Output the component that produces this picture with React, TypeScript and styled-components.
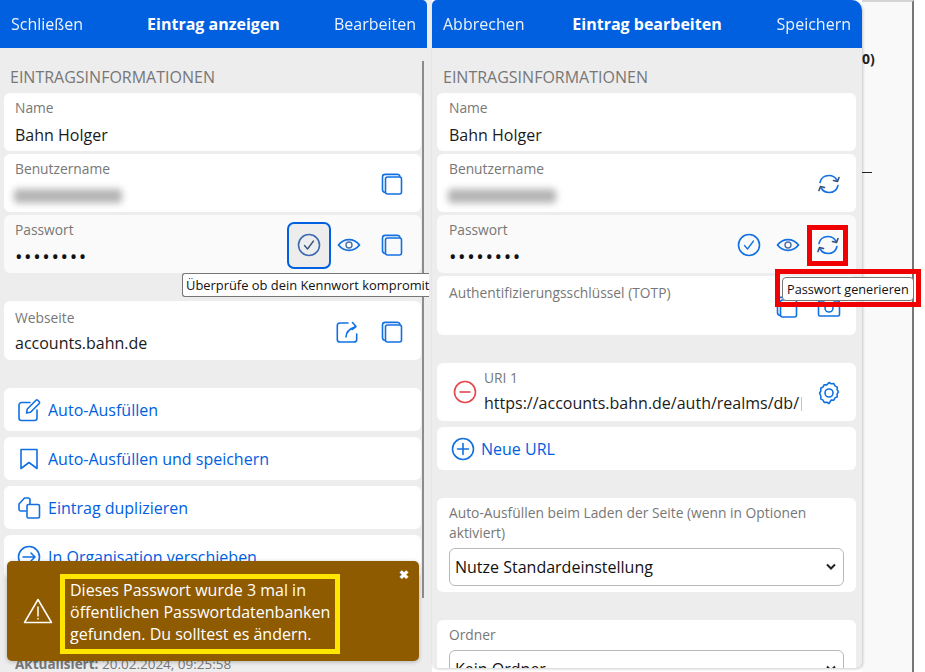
import React from "react";
import styled, { createGlobalStyle } from "styled-components";

const BLUE = "#0060df";
const ICON = "#1270e3";

const GlobalStyle = createGlobalStyle`
  html, body {
    margin: 0;
    padding: 0;
    background: #fff;
  }
  * {
    box-sizing: border-box;
  }
`;

function Svg({ children, size = 24 }: { children: React.ReactNode; size?: number }) {
  return (
    <svg
      width={size}
      height={size}
      viewBox="0 0 24 24"
      fill="none"
      stroke={ICON}
      strokeWidth="1.6"
      strokeLinecap="round"
      strokeLinejoin="round"
    >
      {children}
    </svg>
  );
}

const CopyIcon = () => (
  <Svg>
    <path d="M5 20.5c-1.5-.3-2.5-1.4-2.5-3V5c0-1.6 1-2.6 2.6-2.6h12.3c1.3 0 2.3.7 2.6 1.9" />
    <rect x="5.5" y="5" width="16" height="17" rx="2" />
  </Svg>
);

const CheckIcon = ({ dark }: { dark?: boolean }) => (
  <Svg>
    <circle cx="12" cy="12" r="10.5" stroke={dark ? "#3f6cb0" : ICON} />
    <path d="M7.5 12.5l3 3.5 6-8" stroke={dark ? "#35507a" : ICON} strokeWidth="1.3" />
  </Svg>
);

const EyeIcon = () => (
  <Svg>
    <path d="M1.5 12c2.800-3.500 6.300-5.300 10.500-5.300s7.700 1.800 10.500 5.300c-2.800 3.500-6.300 5.300-10.500 5.300S4.300 15.500 1.500 12z" strokeWidth="1.8" />
    <circle cx="12" cy="12" r="3" stroke="#4a6fa8" strokeWidth="1.4" />
  </Svg>
);

const RefreshIcon = () => (
  <Svg>
    <path d="M3 10.500C4 6.200 7.600 3.500 12 3.500c3.400 0 6.100 1.500 7.800 4.500" />
    <path d="M21 13.500c-1 4.300-4.600 7-9 7-3.400 0-6.100-1.500-7.800-4.500" />
    <path d="M22 5.500l-1.500 4-4-1" stroke="#35507a" />
    <path d="M2 18.500l1.500-4 4 1" stroke="#35507a" />
  </Svg>
);

const ShareIcon = () => (
  <Svg>
    <path d="M13 3H5C3.400 3 2.300 4 2.300 5.600v13.800C2.300 21 3.400 22 5 22h14c1.600 0 2.700-1 2.700-2.600V14" />
    <path d="M11 17c0-4.500 3-8 9-10" />
    <path d="M17.500 2.500l3.500 4-4 3" />
  </Svg>
);

const CameraIcon = () => (
  <Svg>
    <path d="M3 6h4l2-3h6l2 3h4c.8 0 1.500.7 1.500 1.500v12c0 .8-.7 1.500-1.500 1.500H3c-.8 0-1.500-.7-1.500-1.500v-12C1.500 6.700 2.200 6 3 6z" />
    <circle cx="12" cy="13" r="4" />
  </Svg>
);

const EditIcon = () => (
  <Svg>
    <path d="M13 4.500H4.500C3.200 4.500 2 5.600 2 7v13c0 1.400 1.200 2.500 2.500 2.500h13c1.400 0 2.500-1.100 2.500-2.500v-8" />
    <path d="M9.500 15l.8-4L19 2.300c.5-.5 1.200-.5 1.700 0l1.500 1.500c.5.5.5 1.200 0 1.700L13.500 14.200z" />
  </Svg>
);

const BookmarkIcon = () => (
  <Svg>
    <path d="M4 2.500h16v19l-8-6-8 6z" />
  </Svg>
);

const DuplicateIcon = () => (
  <Svg>
    <path d="M9 15H4c-1.300 0-2-.8-2-2V8l5.500-6H11c1.300 0 2 .8 2 2v4" />
    <rect x="10" y="8.500" width="12.500" height="13.500" rx="1.500" />
  </Svg>
);

const MoveIcon = () => (
  <Svg>
    <circle cx="12" cy="12" r="10.500" />
    <path d="M6 12h12M14 8l4 4-4 4" />
  </Svg>
);

const PlusCircleIcon = () => (
  <Svg>
    <circle cx="12" cy="12" r="10.500" />
    <path d="M12 6.500v11M6.500 12h11" />
  </Svg>
);

const MinusCircleIcon = () => (
  <svg width="24" height="24" viewBox="0 0 24 24" fill="none" stroke="#e5484d" strokeWidth="1.6">
    <circle cx="12" cy="12" r="10.500" />
    <path d="M6.500 12h11" />
  </svg>
);

const GearIcon = () => (
  <Svg>
    <path d="M12 1.500l2.200 1.300 2.600-.2 1.200 2.300 2.300 1.200-.2 2.600 1.300 2.200-1.300 2.200.2 2.600-2.300 1.200-1.200 2.300-2.600-.2L12 22.500 9.800 21.200l-2.600.2-1.200-2.300-2.300-1.200.2-2.600L2.600 12l1.300-2.200-.2-2.600 2.300-1.200 1.200-2.300 2.600.2z" />
    <circle cx="12" cy="12" r="4" />
  </Svg>
);

const WarningIcon = () => (
  <svg width="30" height="26" viewBox="0 0 30 26" fill="none" stroke="#fff" strokeWidth="1.5" strokeLinejoin="round">
    <path d="M15 1.500L28.500 24.500H1.500z" />
    <path d="M15 8.500v10M15 20v1.500" />
  </svg>
);

const Chevron = () => (
  <svg width="12" height="8" viewBox="0 0 12 8" fill="none" stroke="#222" strokeWidth="2">
    <path d="M2 1.500l4 4 4-4" />
  </svg>
);

function App() {
  return (
    <>
      <GlobalStyle />
      <Page>
        <Popup $width={432}>
          <Header $inset={5}>
            <HeaderLink>Schließen</HeaderLink>
            <HeaderTitle>Eintrag anzeigen</HeaderTitle>
            <HeaderLink $end>Bearbeiten</HeaderLink>
          </Header>
          <Body>
            <SectionHead $left={10}>Eintragsinformationen</SectionHead>
            <CardList $left={4} $right={11}>
              <ViewCard>
                <Field>
                  <Label>Name</Label>
                  <Value>Bahn Holger</Value>
                </Field>
              </ViewCard>
              <ViewCard>
                <Field>
                  <Label>Benutzername</Label>
                  <Blurred />
                </Field>
                <IconButton $push={4}>
                  <CopyIcon />
                </IconButton>
              </ViewCard>
              <ViewCard $hover>
                <Field>
                  <Label>Passwort</Label>
                  <Dots>••••••••</Dots>
                </Field>
                <FocusButton>
                  <CheckIcon dark />
                </FocusButton>
                <IconButton>
                  <EyeIcon />
                </IconButton>
                <IconButton $push={4}>
                  <CopyIcon />
                </IconButton>
                <Tooltip>Überprüfe ob dein Kennwort kompromit</Tooltip>
              </ViewCard>
            </CardList>
            <CardList $left={4} $right={11} $top={28}>
              <ViewCard $tall>
                <Field>
                  <LowLabel>Webseite</LowLabel>
                  <Value>accounts.bahn.de</Value>
                </Field>
                <IconButton>
                  <ShareIcon />
                </IconButton>
                <IconButton $push={6}>
                  <CopyIcon />
                </IconButton>
              </ViewCard>
            </CardList>
            <ActionList>
              <ActionRow>
                <EditIcon />
                Auto-Ausfüllen
              </ActionRow>
              <ActionRow>
                <BookmarkIcon />
                Auto-Ausfüllen und speichern
              </ActionRow>
              <ActionRow>
                <DuplicateIcon />
                Eintrag duplizieren
              </ActionRow>
              <ActionRow>
                <MoveIcon />
                In Organisation verschieben
              </ActionRow>
            </ActionList>
            <Updated>
              <b>Aktualisiert:</b> 20.02.2024, 09:25:58
            </Updated>
          </Body>
          <ScrollThumb />
          <Toast>
            <WarningIcon />
            <ToastText>
              Dieses Passwort wurde 3 mal in öffentlichen Passwortdatenbanken gefunden. Du solltest es ändern.
            </ToastText>
            <ToastClose>✖</ToastClose>
          </Toast>
        </Popup>
        <Popup $width={430} $rounded>
          <Header>
            <HeaderLink>Abbrechen</HeaderLink>
            <HeaderTitle>Eintrag bearbeiten</HeaderTitle>
            <HeaderLink $end>Speichern</HeaderLink>
          </Header>
          <Body>
            <SectionHead $left={11}>Eintragsinformationen</SectionHead>
            <CardList $left={5} $right={6}>
              <EditCard>
                <Field>
                  <Label>Name</Label>
                  <Value>Bahn Holger</Value>
                </Field>
              </EditCard>
              <EditCard>
                <Field>
                  <Label>Benutzername</Label>
                  <Blurred />
                </Field>
                <IconButton>
                  <RefreshIcon />
                </IconButton>
              </EditCard>
              <EditCard $hover>
                <Field>
                  <Label>Passwort</Label>
                  <Dots>••••••••</Dots>
                </Field>
                <IconButton>
                  <CheckIcon />
                </IconButton>
                <IconButton>
                  <EyeIcon />
                </IconButton>
                <MarkedButton>
                  <RefreshIcon />
                </MarkedButton>
              </EditCard>
              <EditCard $tall>
                <Field>
                  <LowLabel>Authentifizierungsschlüssel (TOTP)</LowLabel>
                </Field>
                <IconButton $pull={3}>
                  <CopyIcon />
                </IconButton>
                <IconButton>
                  <CameraIcon />
                </IconButton>
              </EditCard>
            </CardList>
            <CardList $left={5} $right={6} $top={28} $gap={6}>
              <UriCard>
                <MinusCircleIcon />
                <UriField>
                  <Label>URI 1</Label>
                  <UriValue>https://accounts.bahn.de/auth/realms/db/</UriValue>
                </UriField>
                <IconButton>
                  <GearIcon />
                </IconButton>
              </UriCard>
              <AddRow>
                <PlusCircleIcon />
                Neue URL
              </AddRow>
            </CardList>
            <CardList $left={5} $right={6} $top={28}>
              <SelectCard>
                <Label>Auto-Ausfüllen beim Laden der Seite (wenn in Optionen aktiviert)</Label>
                <SelectBox>
                  Nutze Standardeinstellung
                  <Chevron />
                </SelectBox>
              </SelectCard>
            </CardList>
            <CardList $left={5} $right={6} $top={28}>
              <SelectCard>
                <Label>Ordner</Label>
                <SelectBox>
                  Kein Ordner
                  <Chevron />
                </SelectBox>
              </SelectCard>
            </CardList>
          </Body>
        </Popup>
        <Backdrop>
          <BackdropMark>0)</BackdropMark>
          <BackdropDash />
        </Backdrop>
        <MarkedTooltip>
          <TooltipBubble>Passwort generieren</TooltipBubble>
        </MarkedTooltip>
      </Page>
    </>
  );
}

const Page = styled.div`
  position: relative;
  display: flex;
  width: 925px;
  height: 672px;
  overflow: hidden;
  background: #fff;
  font-family: "Open Sans", "Noto Sans", sans-serif;
`;

const Popup = styled.div<{ $width: number; $rounded?: boolean }>`
  position: relative;
  z-index: ${(props) => (props.$rounded ? 1 : 0)};
  flex: none;
  display: flex;
  flex-direction: column;
  width: ${(props) => props.$width}px;
  height: ${(props) => (props.$rounded ? "668px" : "672px")};
  overflow: hidden;
  background: #ededee;
  border-radius: ${(props) => (props.$rounded ? "5px 10px 6px 6px" : "0")};
  box-shadow: ${(props) => (props.$rounded ? "1px 1px 3px rgba(0, 0, 0, 0.2)" : "none")};
`;

const Header = styled.div<{ $inset?: number }>`
  flex: none;
  height: 48px;
  margin-right: ${(props) => props.$inset || 0}px;
  padding: 0 11px;
  display: grid;
  grid-template-columns: 1fr auto 1fr;
  align-items: center;
  background: ${BLUE};
  border-radius: 0 5px 0 0;
  color: #fff;
  font-size: 16px;
`;

const HeaderLink = styled.span<{ $end?: boolean }>`
  justify-self: ${(props) => (props.$end ? "end" : "start")};
  opacity: 0.92;
`;

const HeaderTitle = styled.span`
  font-weight: 700;
`;

const Body = styled.div`
  flex: 1;
  padding-top: 19px;
  overflow: hidden;
`;

const SectionHead = styled.div<{ $left: number }>`
  height: 21px;
  margin: 0 0 5px ${(props) => props.$left}px;
  color: #777;
  font-size: 16px;
  line-height: 21px;
  text-transform: uppercase;
`;

const CardList = styled.div<{ $left: number; $right: number; $top?: number; $gap?: number }>`
  display: flex;
  flex-direction: column;
  gap: ${(props) => props.$gap || 3}px;
  margin: ${(props) => props.$top || 0}px ${(props) => props.$right}px 0 ${(props) => props.$left}px;
`;

const Card = styled.div<{ $hover?: boolean; $tall?: boolean }>`
  position: relative;
  height: ${(props) => (props.$tall ? "59px" : "58px")};
  display: flex;
  align-items: center;
  border-radius: 6px;
  background: ${(props) => (props.$hover ? "#fafafa" : "#fff")};
`;

const ViewCard = styled(Card)`
  padding: 0 10px 0 11px;
`;

const EditCard = styled(Card)`
  padding: 0 8px 0 12px;
`;

const Field = styled.div`
  flex: 1;
  min-width: 0;
  align-self: stretch;
  display: flex;
  flex-direction: column;
  padding-top: 6px;
`;

const Label = styled.div`
  color: #777;
  font-size: 13.8px;
  line-height: 18px;
`;

const LowLabel = styled(Label)`
  margin: 2px 0 -2px;
`;

const Value = styled.div`
  margin-top: 7px;
  color: #1a1a1a;
  font-size: 16px;
  line-height: 22px;
`;

const Dots = styled.div`
  margin-top: 7px;
  color: #111;
  font-size: 20px;
  line-height: 22px;
  letter-spacing: 1.6px;
`;

const Blurred = styled.div`
  width: 108px;
  height: 14px;
  margin: 11px 0 0 -1px;
  background: #b4b4b4;
  border-radius: 3px;
  filter: blur(3.5px);
`;

const IconButton = styled.div<{ $push?: number; $pull?: number }>`
  flex: none;
  width: 39px;
  height: 40px;
  margin-top: 2px;
  margin-left: ${(props) => props.$push || 0}px;
  margin-right: ${(props) => props.$pull || 0}px;
  display: flex;
  align-items: center;
  justify-content: center;
`;

const FocusButton = styled(IconButton)`
  width: 44px;
  height: 47px;
  margin-right: -2px;
  background: #ededee;
  border: 2px solid ${BLUE};
  border-radius: 7px;
`;

const MarkedButton = styled(IconButton)`
  width: 41px;
  height: 41px;
  border: 5px solid #f00000;
`;

const Tooltip = styled.div`
  position: absolute;
  left: 178px;
  top: 58px;
  z-index: 3;
  width: 247px;
  height: 24px;
  padding: 2px 0 0 3px;
  white-space: nowrap;
  background: #fff;
  border: 1px solid #767676;
  border-right: 0;
  border-radius: 3px 0 0 3px;
  color: #111;
  font-size: 12.9px;
  line-height: 18px;
`;

const ActionList = styled.div`
  display: flex;
  flex-direction: column;
  gap: 6px;
  margin: 28px 11px 0 4px;
`;

const ActionRow = styled.div`
  height: 43px;
  padding-left: 13px;
  display: flex;
  align-items: center;
  gap: 7px;
  background: #fff;
  border-radius: 6px;
  color: ${BLUE};
  font-size: 16px;
`;

const Updated = styled.div`
  margin: 78px 0 0 15px;
  color: #777;
  font-size: 13.5px;
  line-height: 16px;
`;

const ScrollThumb = styled.div`
  position: absolute;
  left: 422px;
  top: 61px;
  width: 2px;
  height: 537px;
  background: #8c8c8c;
`;

const Toast = styled.div`
  position: absolute;
  left: 7px;
  top: 561px;
  width: 412px;
  height: 100px;
  padding-left: 16px;
  display: flex;
  align-items: center;
  gap: 7px;
  background: #8f5b00;
  border-radius: 5px;
  box-shadow: 0 1px 4px rgba(0, 0, 0, 0.25);
`;

const ToastText = styled.div`
  width: 280px;
  height: 80px;
  margin-top: 6px;
  padding-left: 5px;
  border: 5px solid #ffe600;
  color: #fff;
  font-size: 16px;
  line-height: 22px;
`;

const ToastClose = styled.span`
  position: absolute;
  right: 10px;
  top: 5px;
  color: #fff;
  font-size: 12px;
  font-weight: 700;
`;

const UriCard = styled(Card)`
  gap: 7px;
  padding: 0 8px 0 16px;
`;

const UriField = styled(Field)`
  flex: 1;
`;

const UriValue = styled(Value)`
  margin-top: 5px;
  white-space: nowrap;
  &::after {
    content: "";
    display: inline-block;
    width: 1px;
    height: 14px;
    margin-left: 2px;
    vertical-align: -2px;
    background: #c4c4c4;
  }
`;

const AddRow = styled.div`
  height: 43px;
  padding-left: 14px;
  display: flex;
  align-items: center;
  gap: 6px;
  background: #fff;
  border-radius: 6px;
  color: ${BLUE};
  font-size: 16px;
`;

const SelectCard = styled.div`
  padding: 5px 12px 6px;
  background: #fff;
  border-radius: 6px;
  ${Label} {
    line-height: 20px;
    margin-bottom: 5px;
  }
`;

const SelectBox = styled.div`
  height: 38px;
  padding: 0 6px 0 5px;
  display: flex;
  align-items: center;
  justify-content: space-between;
  border: 1px solid #b8b8b8;
  border-radius: 6px;
  color: #111;
  font-size: 16px;
`;

const Backdrop = styled.div`
  flex: none;
  width: 52px;
  height: 672px;
  padding-top: 47px;
  background: #f9f9fa;
  border-top: 2px solid #d4d4d4;
  border-right: 2px solid #777;
`;

const BackdropMark = styled.div`
  color: #222;
  font-size: 14px;
  font-weight: 700;
  line-height: 19px;
`;

const BackdropDash = styled.div`
  width: 10px;
  height: 1px;
  margin-top: 104px;
  background: #222;
`;

const MarkedTooltip = styled.div`
  position: absolute;
  left: 775px;
  top: 269px;
  z-index: 4;
  width: 146px;
  height: 38px;
  padding: 3px 2px;
  border: 5px solid #f00000;
`;

const TooltipBubble = styled.div`
  height: 24px;
  padding: 0 4px;
  background: #fff;
  border: 1px solid #767676;
  border-radius: 4px;
  color: #111;
  font-size: 12.7px;
  line-height: 23px;
  white-space: nowrap;
`;

export default App;
